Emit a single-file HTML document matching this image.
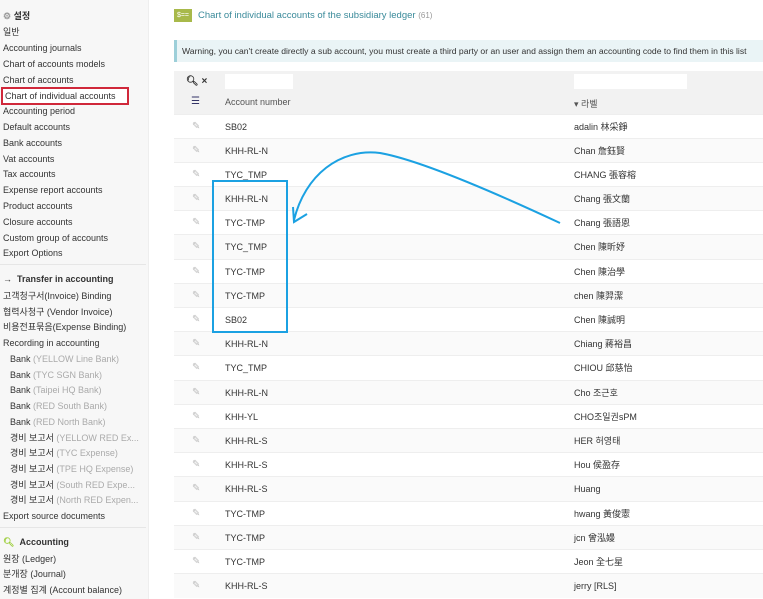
<html><head><style>
body{margin:0;width:763px;height:599px;overflow:hidden;font-family:"Liberation Sans","Noto Sans CJK KR",sans-serif;font-size:9px;color:#333;background:#fff;position:relative}
.side{position:absolute;left:0;top:0;width:148px;height:599px;background:#f7f7f7;border-right:1px solid #eee}
.side div{position:absolute;left:3px;white-space:nowrap;line-height:12px}
.g{color:#aaa}
.b{font-weight:bold}
.hr{position:absolute;left:0;width:146px;border-top:1px solid #e6e6e6}
.main{position:absolute;left:150px;top:0;right:0}
.row{position:absolute;left:24px;width:589px;height:24px;line-height:24px;border-top:1px solid #eee}
.row span{position:absolute}
.pen{left:18px;color:#bbb;font-size:10px}
.c1{left:51px}.c2{left:400px}
</style></head><body>
<div class="side">
<div style="top:10px" class="b"><span style="color:#999">⚙</span> 설정</div>
<div style="top:26px">일반</div>
<div style="top:42px">Accounting journals</div>
<div style="top:58px">Chart of accounts models</div>
<div style="top:74px">Chart of accounts</div>
<div style="top:87px;left:1px;width:122px;height:14px;border:2px solid #d0283a;line-height:14px;padding-left:2px;background:#fff">Chart of individual accounts</div>
<div style="top:105px">Accounting period</div>
<div style="top:121px">Default accounts</div>
<div style="top:137px">Bank accounts</div>
<div style="top:153px">Vat accounts</div>
<div style="top:168px">Tax accounts</div>
<div style="top:184px">Expense report accounts</div>
<div style="top:200px">Product accounts</div>
<div style="top:216px">Closure accounts</div>
<div style="top:232px">Custom group of accounts</div>
<div style="top:247px">Export Options</div>
<span class="hr" style="top:264px"></span>
<div style="top:273px" class="b">→ &nbsp;Transfer in accounting</div>
<div style="top:290px">고객청구서(Invoice) Binding</div>
<div style="top:306px">협력사청구 (Vendor Invoice)</div>
<div style="top:321px">비용전표묶음(Expense Binding)</div>
<div style="top:337px">Recording in accounting</div>
<div style="top:353px;left:10px">Bank <span class="g">(YELLOW Line Bank)</span></div>
<div style="top:369px;left:10px">Bank <span class="g">(TYC SGN Bank)</span></div>
<div style="top:384px;left:10px">Bank <span class="g">(Taipei HQ Bank)</span></div>
<div style="top:400px;left:10px">Bank <span class="g">(RED South Bank)</span></div>
<div style="top:416px;left:10px">Bank <span class="g">(RED North Bank)</span></div>
<div style="top:432px;left:10px">경비 보고서 <span class="g">(YELLOW RED Ex...</span></div>
<div style="top:447px;left:10px">경비 보고서 <span class="g">(TYC Expense)</span></div>
<div style="top:463px;left:10px">경비 보고서 <span class="g">(TPE HQ Expense)</span></div>
<div style="top:479px;left:10px">경비 보고서 <span class="g">(South RED Expe...</span></div>
<div style="top:494px;left:10px">경비 보고서 <span class="g">(North RED Expen...</span></div>
<div style="top:510px">Export source documents</div>
<span class="hr" style="top:527px"></span>
<div style="top:536px" class="b"><span style="color:#9c3">&#x1F50D;&#xFE0E;</span> &nbsp;Accounting</div>
<div style="top:553px">원장 (Ledger)</div>
<div style="top:568px">분개장 (Journal)</div>
<div style="top:584px">계정별 집계 (Account balance)</div>
</div>
<div class="main">
<div style="position:absolute;left:24px;top:9px;width:18px;height:13px;background:#a8b94a;color:#fff;font-size:7px;line-height:13px;text-align:center">$==</div>
<div style="position:absolute;left:48px;top:10px;color:#3a8a9a;font-size:9.5px">Chart of individual accounts of the subsidiary ledger <span style="color:#999;font-size:8px">(61)</span></div>
<div style="position:absolute;left:24px;top:40px;width:589px;height:22px;background:#eaf4f6;border-left:3px solid #9dcfd9;line-height:22px;font-size:8.6px;padding-left:5px;box-sizing:border-box;white-space:nowrap;overflow:hidden">Warning, you can't create directly a sub account, you must create a third party or an user and assign them an accounting code to find them in this list</div>
<div style="position:absolute;left:24px;top:71px;width:589px;height:43px;background:#f2f2f2"></div>
<div style="position:absolute;left:36px;top:76px;font-weight:bold;font-size:10px">🔍&#xFE0E; ×</div>
<div style="position:absolute;left:75px;top:74px;width:68px;height:15px;background:#fff"></div>
<div style="position:absolute;left:424px;top:74px;width:113px;height:15px;background:#fff"></div>
<div style="position:absolute;left:41px;top:96px;color:#336;font-size:10px">☰</div>
<div style="position:absolute;left:75px;top:97px;color:#555">Account number</div>
<div style="position:absolute;left:424px;top:97px;color:#555">▾ 라벨</div>
<div style="position:absolute;top:114px;left:0;width:613px">
<div class="row" style="top:0;background:#fff"><span class="pen">✎</span><span class="c1">SB02</span><span class="c2">adalin 林采錚</span></div>
<div class="row" style="top:24px;background:#fafafa"><span class="pen">✎</span><span class="c1">KHH-RL-N</span><span class="c2">Chan 詹鈺賢</span></div>
<div class="row" style="top:48px;background:#fff"><span class="pen">✎</span><span class="c1">TYC_TMP</span><span class="c2">CHANG 張容榕</span></div>
<div class="row" style="top:72px;background:#fafafa"><span class="pen">✎</span><span class="c1">KHH-RL-N</span><span class="c2">Chang 張文蘭</span></div>
<div class="row" style="top:96px;background:#fff"><span class="pen">✎</span><span class="c1">TYC-TMP</span><span class="c2">Chang 張語恩</span></div>
<div class="row" style="top:120px;background:#fafafa"><span class="pen">✎</span><span class="c1">TYC_TMP</span><span class="c2">Chen 陳昕妤</span></div>
<div class="row" style="top:145px;background:#fff"><span class="pen">✎</span><span class="c1">TYC-TMP</span><span class="c2">Chen 陳治學</span></div>
<div class="row" style="top:169px;background:#fafafa"><span class="pen">✎</span><span class="c1">TYC-TMP</span><span class="c2">chen 陳羿潔</span></div>
<div class="row" style="top:193px;background:#fff"><span class="pen">✎</span><span class="c1">SB02</span><span class="c2">Chen 陳誠明</span></div>
<div class="row" style="top:217px;background:#fafafa"><span class="pen">✎</span><span class="c1">KHH-RL-N</span><span class="c2">Chiang 蔣裕昌</span></div>
<div class="row" style="top:241px;background:#fff"><span class="pen">✎</span><span class="c1">TYC_TMP</span><span class="c2">CHIOU 邱慈怡</span></div>
<div class="row" style="top:266px;background:#fafafa"><span class="pen">✎</span><span class="c1">KHH-RL-N</span><span class="c2">Cho 조근호</span></div>
<div class="row" style="top:290px;background:#fff"><span class="pen">✎</span><span class="c1">KHH-YL</span><span class="c2">CHO조일권sPM</span></div>
<div class="row" style="top:314px;background:#fafafa"><span class="pen">✎</span><span class="c1">KHH-RL-S</span><span class="c2">HER 허영태</span></div>
<div class="row" style="top:338px;background:#fff"><span class="pen">✎</span><span class="c1">KHH-RL-S</span><span class="c2">Hou 侯盈存</span></div>
<div class="row" style="top:362px;background:#fafafa"><span class="pen">✎</span><span class="c1">KHH-RL-S</span><span class="c2">Huang</span></div>
<div class="row" style="top:387px;background:#fff"><span class="pen">✎</span><span class="c1">TYC-TMP</span><span class="c2">hwang 黃俊憲</span></div>
<div class="row" style="top:411px;background:#fafafa"><span class="pen">✎</span><span class="c1">TYC-TMP</span><span class="c2">jcn 曾泓嫚</span></div>
<div class="row" style="top:435px;background:#fff"><span class="pen">✎</span><span class="c1">TYC-TMP</span><span class="c2">Jeon 全七星</span></div>
<div class="row" style="top:459px;background:#fafafa"><span class="pen">✎</span><span class="c1">KHH-RL-S</span><span class="c2">jerry [RLS]</span></div>
</div>
</div>
<svg style="position:absolute;left:0;top:0" width="763" height="599">
<rect x="213" y="181" width="74" height="151" fill="none" stroke="#1ba1e2" stroke-width="2"/>
<path d="M560 223 C500 195 420 160 380 153 C340 148 305 175 294 220" fill="none" stroke="#1ba1e2" stroke-width="2"/>
<path d="M293 207 L294 222 L307 214" fill="none" stroke="#1ba1e2" stroke-width="2"/>
</svg>
</body></html>
